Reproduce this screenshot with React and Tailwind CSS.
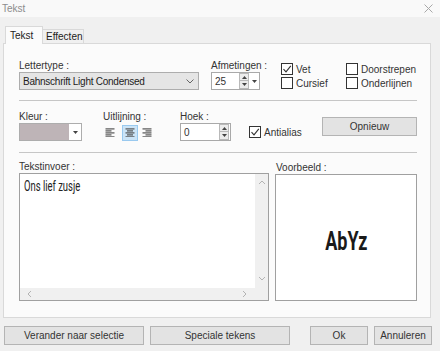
import React from "react";

const ui = "font-['Liberation_Sans','Noto_Sans',sans-serif]";

function Check({ checked, label }) {
	return (
		<div className="flex items-center h-[14px]">
			<div className="w-[12px] h-[12px] border border-[#333] bg-white flex items-center justify-center">
				{checked && (
					<svg width="10" height="10" viewBox="0 0 10 10">
						<path d="M1.5 5.2 L4 7.8 L8.8 1.8" fill="none" stroke="#333" strokeWidth="1.1" />
					</svg>
				)}
			</div>
			<span className="ml-[3px]">{label}</span>
		</div>
	);
}

function Spin({ w, value, drop }) {
	return (
		<div className={`${w} h-[18px] border border-[#a9a9a9] bg-white flex items-center`}>
			<span className="pl-[3px] flex-1">{value}</span>
			<div className="w-[10px] h-[16px] flex flex-col mr-[1px]">
				<div className="h-[8px] border border-[#b9b9b9] bg-[#ececec] flex items-center justify-center">
					<svg width="5" height="3" viewBox="0 0 5 3"><path d="M0 3 L2.5 0 L5 3Z" fill="#444" /></svg>
				</div>
				<div className="h-[8px] border border-[#b9b9b9] border-t-0 bg-[#ececec] flex items-center justify-center">
					<svg width="5" height="3" viewBox="0 0 5 3"><path d="M0 0 L2.5 3 L5 0Z" fill="#444" /></svg>
				</div>
			</div>
			{drop && (
				<div className="w-[9px] flex items-center justify-center">
					<svg width="5" height="3" viewBox="0 0 5 3"><path d="M0 0 L2.5 3 L5 0Z" fill="#444" /></svg>
				</div>
			)}
		</div>
	);
}

function AlignIcon({ kind }) {
	const rows = [9, 6, 9, 6, 9];
	return (
		<svg width="10" height="9" viewBox="0 0 10 9">
			{rows.map((len, i) => {
				const x = kind === "left" ? 0.5 : kind === "right" ? 9.5 - len : (10 - len) / 2;
				return <rect key={i} x={x} y={i * 2 - 0.2 + 0.5} width={len} height="1.2" fill="#555" />;
			})}
		</svg>
	);
}

function Chevron({ dir }) {
	const d = {
		up: "M1 5 L4 2 L7 5",
		down: "M1 2 L4 5 L7 2",
		left: "M5 1 L2 4 L5 7",
		right: "M2 1 L5 4 L2 7",
	}[dir];
	return (
		<svg width="8" height="8" viewBox="0 0 8 8">
			<path d={d} fill="none" stroke="#b3b3b3" strokeWidth="1" />
		</svg>
	);
}

function Button({ w, children, className = "" }) {
	return (
		<div className={`${w} h-[19px] bg-[#e3e3e3] border border-[#b4b4b4] flex items-center justify-center ${className}`}>
			{children}
		</div>
	);
}

export default function App() {
	return (
		<div className={`w-[440px] h-[351px] bg-[#f0f0f0] flex flex-col text-[10px] text-[#333] ${ui}`}>
			{/* title bar */}
			<div className="h-[17px] bg-[#f9f9f9] flex items-center justify-between pl-[2px] pr-[7px]">
				<span className="text-[#8c8c8c] text-[10px]">Tekst</span>
				<svg width="9" height="9" viewBox="0 0 9 9">
					<path d="M0.5 0.5 L8.5 8.5 M8.5 0.5 L0.5 8.5" stroke="#a8a8a8" strokeWidth="1" />
				</svg>
			</div>

			{/* tabs */}
			<div className="h-[26px] flex items-end pl-[5px]">
				<div className="w-[38px] h-[18px] bg-[#fbfbfb] border border-b-0 border-[#d9d9d9] flex items-center pl-[4px] -mb-px relative z-10 text-[#222]">
					Tekst
				</div>
				<div className="w-[41px] h-[14px] bg-[#f0f0f0] border border-l-0 border-b-0 border-[#d9d9d9] flex items-center pl-[3px] text-[#222]">
					Effecten
				</div>
			</div>

			{/* panel */}
			<div className="ml-[3px] w-[428px] h-[275px] border border-[#d9d9d9] bg-[#fbfbfb] pl-[15px] pr-[13px] pt-[16px] flex flex-col">
				{/* row 1 */}
				<div className="flex">
					<div className="w-[180px] flex flex-col">
						<span className="leading-[12px] h-[12px]">Lettertype :</span>
						<div className="h-[18px] bg-[#e5e5e5] border border-[#adadad] flex items-center justify-between pl-[3px] pr-[4px]">
							<span className="text-[#222] tracking-[-0.25px]">Bahnschrift Light Condensed</span>
							<svg width="8" height="5" viewBox="0 0 8 5"><path d="M0.5 0.5 L4 4 L7.5 0.5" fill="none" stroke="#666" strokeWidth="1" /></svg>
						</div>
					</div>
					<div className="ml-[12px] w-[49px] flex flex-col">
						<span className="leading-[12px] h-[12px] whitespace-nowrap">Afmetingen :</span>
						<Spin w="w-[49px]" value="25" drop />
					</div>
					<div className="ml-[21px] w-[65px] flex flex-col mt-[2px]">
						<Check checked label="Vet" />
						<Check label="Cursief" />
					</div>
					<div className="flex flex-col mt-[2px]">
						<Check label="Doorstrepen" />
						<Check label="Onderlijnen" />
					</div>
				</div>

				<div className="mt-[10px] border-t border-[#c6c6c6]" />

				{/* row 2 */}
				<div className="flex mt-[10px]">
					<div className="w-[63px] flex flex-col">
						<span className="leading-[12px] h-[12px]">Kleur :</span>
						<div className="h-[18px] border border-[#adadad] bg-white flex">
							<div className="flex-1 bg-[#beb4b7]" />
							<div className="w-[12px] flex items-center justify-center">
								<svg width="5" height="3" viewBox="0 0 5 3"><path d="M0 0 L2.5 3 L5 0Z" fill="#444" /></svg>
							</div>
						</div>
					</div>
					<div className="ml-[21px] w-[77px] flex flex-col">
						<span className="leading-[12px] h-[12px]">Uitlijning :</span>
						<div className="flex items-center h-[17px] mt-[1px]">
							<div className="w-[14px] h-[16px] flex items-center justify-center"><AlignIcon kind="left" /></div>
							<div className="ml-[5px] w-[16px] h-[16px] bg-[#cce4f7] border border-[#99c9ef] flex items-center justify-center"><AlignIcon kind="center" /></div>
							<div className="ml-[1px] w-[16px] h-[16px] flex items-center justify-center"><AlignIcon kind="right" /></div>
						</div>
					</div>
					<div className="w-[51px] flex flex-col">
						<span className="leading-[12px] h-[12px]">Hoek :</span>
						<Spin w="w-[51px]" value="0" />
					</div>
					<div className="ml-[18px] self-end mb-[2px]">
						<Check checked label="Antialias" />
					</div>
					<Button w="w-[95px]" className="ml-auto mt-[6px]">Opnieuw</Button>
				</div>

				<div className="mt-[11px] border-t border-[#c6c6c6]" />

				{/* row 3 */}
				<div className="flex mt-[8px]">
					<div className="w-[250px] flex flex-col">
						<span className="leading-[12px] h-[12px]">Tekstinvoer :</span>
						<div className="h-[128px] border border-[#a0a0a0] bg-white flex flex-col">
							<div className="flex-1 flex">
								<div className="flex-1 pl-[4px] pt-[3px]">
									<span className="inline-block origin-left scale-x-[0.63] whitespace-nowrap text-[15px] leading-[18px] text-[#222] font-['Roboto',sans-serif]">
										Ons lief zusje
									</span>
								</div>
								<div className="w-[13px] bg-[#f0f0f0] flex flex-col items-center justify-between py-[5px]">
									<Chevron dir="up" />
									<Chevron dir="down" />
								</div>
							</div>
							<div className="h-[12px] flex">
								<div className="flex-1 bg-[#f0f0f0] flex items-center justify-between px-[6px]">
									<Chevron dir="left" />
									<Chevron dir="right" />
								</div>
								<div className="w-[13px] bg-[#f0f0f0]" />
							</div>
						</div>
					</div>
					<div className="ml-[6px] w-[142px] flex flex-col">
						<span className="leading-[12px] h-[12px] pl-[1px] mt-[1px]">Voorbeeld :</span>
						<div className="h-[127px] border border-[#a0a0a0] bg-white flex items-center justify-center pt-[8px]">
							<span className="inline-block scale-x-[0.72] text-[25px] font-bold text-[#1a1a1a] font-['Roboto',sans-serif]">
								AbYz
							</span>
						</div>
					</div>
				</div>
			</div>

			{/* buttons */}
			<div className="flex mt-[8px] pl-[4px]">
				<Button w="w-[140px]">Verander naar selectie</Button>
				<Button w="w-[140px]" className="ml-[6px]">Speciale tekens</Button>
				<Button w="w-[58px]" className="ml-[20px]">Ok</Button>
				<Button w="w-[58px]" className="ml-[6px]">Annuleren</Button>
			</div>
		</div>
	);
}
